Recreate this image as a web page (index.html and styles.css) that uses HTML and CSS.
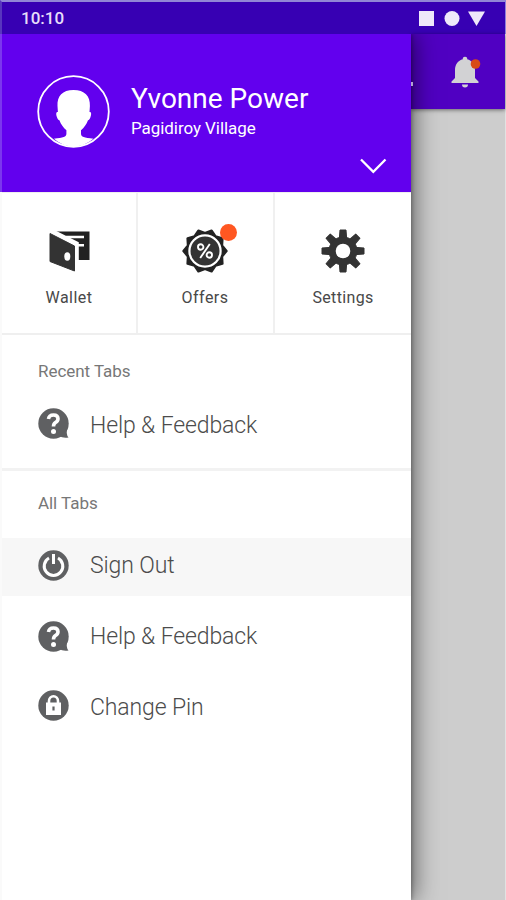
FILE: index.html
```html
<!DOCTYPE html>
<html lang="en">
<head>
<meta charset="utf-8">
<title>Navigation drawer</title>
<link rel="stylesheet" href="styles.css">
</head>
<body>
<svg class="defs" width="0" height="0" aria-hidden="true">
  <symbol id="help" viewBox="0 0 32 32">
    <circle cx="15.5" cy="15.5" r="15.2" fill="#5f6062"/>
    <path d="M29.500 20 Q27.500 26 30.500 29.500 Q25 30.500 21 28z" fill="#5f6062"/>
    <path d="M10.500 11 Q11 7 15.500 7 Q20 7 20 10.800 Q20 13 17.500 14.500 Q15.500 15.800 15.500 18.500" fill="none" stroke="#fff" stroke-width="3.600"/>
    <circle cx="15.500" cy="23.500" r="2.500" fill="#fff"/>
  </symbol>
</svg>
<div class="screen">
  <header class="status">
    <span class="time">10:10</span>
    <svg class="indicators" width="68" height="18" viewBox="0 0 68 18" fill="#eee8fa">
      <rect x="1" y="2" width="15" height="15"/>
      <circle cx="34" cy="9.500" r="7.500"/>
      <path d="M50 2.500h17L58.500 17z"/>
    </svg>
  </header>
  <div class="body">
    <aside class="drawer">
      <section class="profile">
        <svg class="avatar" width="74" height="74" viewBox="0 0 74 74">
          <circle cx="36.500" cy="36.500" r="35.300" fill="none" stroke="#fff" stroke-width="1.800"/>
          <path d="M36.500 15c-11 0-16.500 6-16 16l.4 6c-2 0-2 2-1 5 .5 2 1.500 3 2.500 3.200 1.500 4 4 7.500 7 10v3.500c0 3-3 4-12.500 5Q26 71.500 36.500 71.500T56.500 63.700c-9.500-1-12.500-2-12.500-5V55.200c3-2.500 5.500-6 7-10 1-.2 2-1.200 2.500-3.200 1-3 1-5-1-5l.4-6c.5-10-5.400-16-16.400-16z" fill="#fff"/>
        </svg>
        <div class="who">
          <h1>Yvonne Power</h1>
          <p>Pagidiroy Village</p>
        </div>
        <svg class="chevron" width="28" height="16" viewBox="0 0 28 16"><path d="M2 1.500L14.300 13.800 26.500 1.500" fill="none" stroke="#fff" stroke-width="2.300"/></svg>
      </section>
      <nav class="tiles">
        <a class="tile">
          <svg width="48" height="48" viewBox="0 0 48 48">
            <path d="M9 4.500h35.500V33H32V16z" fill="#222"/>
            <path d="M21 10h18M30 18.300h9" stroke="#fff" stroke-width="2.600"/>
            <path d="M5 3L31.800 16.500V43" fill="none" stroke="#fff" stroke-width="4"/>
            <path d="M5 6.500L29.500 19V44L5 34.500z" fill="#333" stroke="#333" stroke-linejoin="round"/>
            <ellipse cx="22.300" cy="29.500" rx="3" ry="4.200" fill="#fff"/>
          </svg>
          <span>Wallet</span>
        </a>
        <a class="tile">
          <svg width="48" height="48" viewBox="-24 -24 48 48">
            <path d="M21.500 0L17 5.500 17.400 12.600 10.500 14.500 6.600 20.400 0 17.900-6.600 20.400-10.500 14.500-17.400 12.600-17 5.500-21.500 0-17-5.500-17.400-12.600-10.500-14.500-6.600-20.400 0-17.900 6.600-20.400 10.500-14.500 17.400-12.600 17-5.500z" fill="#222" stroke="#222" stroke-width="2.400" stroke-linejoin="round"/>
            <circle r="15.600" fill="#333" stroke="#fff" stroke-width="2.200"/>
            <g fill="none" stroke="#fff" stroke-width="1.900"><circle cx="-4.300" cy="-4" r="2.700"/><circle cx="4.300" cy="4" r="2.700"/><path d="M4.800-7L-4.800 7"/></g>
          </svg>
          <i class="badge"></i>
          <span class="offers">Offers</span>
        </a>
        <a class="tile">
          <svg width="48" height="48" viewBox="-24 -24 48 48">
            <g fill="#333" stroke="#333" stroke-linejoin="round">
              <path id="tooth" d="M-3.600-13L-3-21h6L3.600-13V13L3 21h-6L-3.600 13z"/>
              <use href="#tooth" transform="rotate(45)"/><use href="#tooth" transform="rotate(90)"/><use href="#tooth" transform="rotate(135)"/>
              <circle r="14"/>
            </g>
            <circle r="7.300" fill="#fff"/>
          </svg>
          <span class="settings">Settings</span>
        </a>
      </nav>
      <section class="group recent">
        <h2>Recent Tabs</h2>
        <a class="item"><svg width="32" height="32"><use href="#help"/></svg><span>Help &amp; Feedback</span></a>
      </section>
      <section class="group all">
        <h2>All Tabs</h2>
        <a class="item active">
          <svg width="32" height="32" viewBox="0 0 32 32"><circle cx="15.500" cy="15.500" r="15.200" fill="#5f6062"/><path d="M11 8A9.300 9.300 0 1 0 20 8M15.500 4V14" fill="none" stroke="#fff" stroke-width="3"/></svg>
          <span>Sign Out</span>
        </a>
        <a class="item"><svg width="32" height="32"><use href="#help"/></svg><span>Help &amp; Feedback</span></a>
        <a class="item">
          <svg width="32" height="32" viewBox="0 0 32 32"><circle cx="15.500" cy="15.500" r="15.200" fill="#5f6062"/><path d="M8 12.500h15V25H8z" fill="#fff"/><path d="M11 13V11a4.500 4.800 0 0 1 9 0V13" fill="none" stroke="#fff" stroke-width="2.600"/><path d="M15.500 16.500v4" stroke="#5f6062" stroke-width="2.200"/></svg>
          <span>Change Pin</span>
        </a>
      </section>
    </aside>
    <main class="page">
      <div class="appbar">
        <i class="dot"></i>
        <svg class="bell" width="30" height="34" viewBox="0 0 30 34"><path d="M14 .8a2.200 2.200 0 0 1 2.200 2.500C21 4.500 24 8.500 24 14V22l3.500 3.500v1.500H.5v-1.500L4 22v-8C4 8.500 7 4.500 11.800 3.300A2.200 2.200 0 0 1 14 .8zM11 28.500h6a3 3 0 0 1-6 0z" fill="#d2d2d4"/><circle cx="24.500" cy="8" r="4.800" fill="#d84a18"/></svg>
      </div>
    </main>
  </div>
</div>
</body>
</html>
```
FILE: styles.css
```css
* { box-sizing: border-box; margin: 0; padding: 0; }
body { font-family: Roboto, "Liberation Sans", sans-serif; background: #cdcdcd; }
.defs { position: absolute; }
.screen { width: 506px; height: 900px; display: flex; flex-direction: column; overflow: hidden; }
.status { height: 34px; background: #3700b3; border-top: 2px solid #9186d6; border-right: 1px solid #8f80dc; border-left: 2px solid #5836be; display: flex; align-items: center; justify-content: space-between; padding: 0 19px 0 19px; color: #e6defa; }
.time { font-size: 17px; font-weight: 500; }
.body { flex: 1; display: flex; }
.drawer { width: 411px; background: #fff; position: relative; z-index: 1; box-shadow: 4px 0 22px rgba(0,0,0,.5), 1px 0 4px rgba(0,0,0,.3); clip-path: inset(0 -60px 0 0); border-left: 2px solid #fafafa; }
.profile { height: 158px; margin-left: -2px; background: #6200ee; border-left: 2px solid #7b37ee; color: #fff; display: flex; padding: 40px 24px 0 35px; }
.who { padding: 7px 0 0 20px; flex: 1; }
h1 { font-size: 28px; font-weight: 400; line-height: 36px; white-space: nowrap; width: 0; }
.who p { font-size: 17px; line-height: 22px; white-space: nowrap; width: 0; letter-spacing: -.06px; }
.chevron { margin-top: 84px; flex: none; }
.avatar { flex: none; margin-top: 1px; }
.tiles { display: grid; grid-template-columns: 134px 137px 1fr; height: 143px; border-bottom: 2px solid #efefef; border-top: 1px solid #eee; }
.tile { display: flex; flex-direction: column; align-items: center; padding-top: 34px; position: relative; font-size: 16px; color: #484848; }
.tile + .tile { border-left: 2px solid #f0f0f0; }
.tile:nth-child(2) { padding-right: 1px; }
.tile span { margin-top: 13px; line-height: 20px; letter-spacing: .45px; }
.tile .settings { letter-spacing: .35px; }
.badge { position: absolute; left: 82px; top: 31px; width: 17px; height: 17px; border-radius: 50%; background: #ff5722; }
h2 { font-size: 17px; font-weight: 400; color: #777; line-height: 20px; padding-left: 36px; letter-spacing: -.05px; }
.recent { height: 136px; padding-top: 26px; border-bottom: 3px solid #f2f2f2; }
.all { padding-top: 22px; }
.item { display: flex; align-items: center; height: 58px; padding-left: 36px; color: #4c4c4c; font-size: 23px; font-weight: 300; letter-spacing: -.12px; }
.item svg { margin-right: 20px; }
.item span { position: relative; top: -1px; }
.recent .item { margin-top: 14px; }
.recent .item span { top: 1px; }
.active { margin-top: 25px; background: #f7f7f7; padding-bottom: 2px; }
.active + .item { margin-top: 12px; }
.active + .item + .item { margin-top: 11px; }
.active + .item + .item span { top: 1px; }
.page { flex: 1; background: #cdcdcd; border-right: 1px solid #e2e2e2; }
.appbar { height: 75px; background: #5000c2; display: flex; align-items: flex-start; padding: 22px 0 0 0; box-shadow: 0 1px 4px rgba(0,0,0,.5); }
.dot { width: 2px; height: 4px; margin: 26px 38px 0 0; background: #b3a4d0; position: relative; z-index: 2; }
```
